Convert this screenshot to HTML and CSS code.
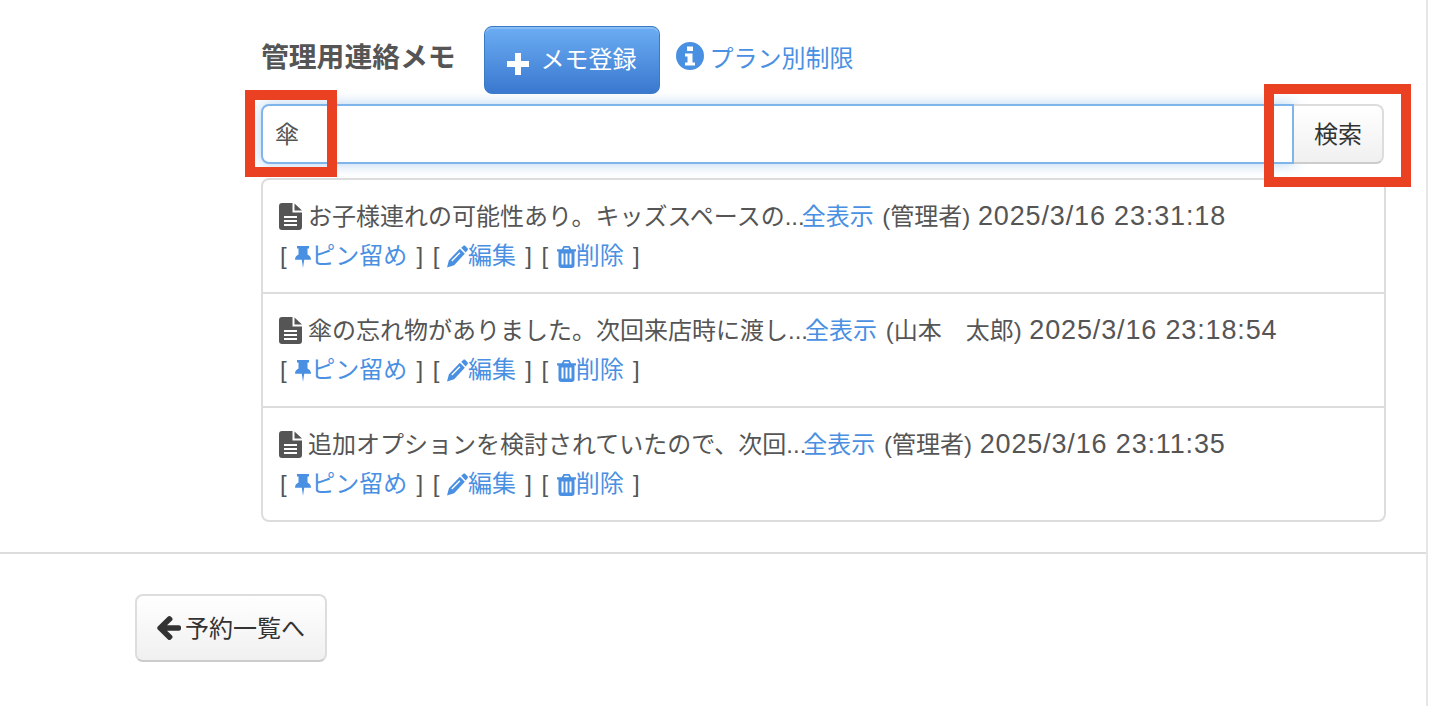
FILE: index.html
```html
<!DOCTYPE html>
<html lang="ja">
<head>
  <meta charset="UTF-8">
  <meta name="viewport" content="width=device-width, initial-scale=1.0">
  <title>管理用連絡メモ</title>
  <link rel="stylesheet" href="styles.css">
</head>
<body>
  <svg class="icon-defs">
    <symbol id="i-file" viewBox="0 0 23 27"><path fill-rule="evenodd" d="M3 0h10.500v9.500H23V24a3 3 0 0 1-3 3H3a3 3 0 0 1-3-3V3a3 3 0 0 1 3-3zM15.500 0.500L23 7.500h-7.500zM5 13v2h13v-2zM5 17v2h13v-2zM5 21v2h13v-2z"/></symbol>
    <symbol id="i-pin" viewBox="0 0 16 22"><path d="M2 0h12v2.500h-1.500v6c2.200 1 3.500 2.800 3.500 5.300H9.200L8 22l-1.200-8.200H0c0-2.500 1.300-4.300 3.500-5.300v-6H2z"/></symbol>
    <symbol id="i-pencil" viewBox="0 0 22 23"><path fill-rule="evenodd" d="M17 0.500c.7-.6 1.600-.6 2.200 0l2.300 2.300c.6.6.6 1.500 0 2.200l-2 2.200-4.600-4.800zM13.500 3.300l5.200 5.200L7.500 20.700 0 23l2-7.700zM13 7L4.500 15.800l1 1L14 8z"/></symbol>
    <symbol id="i-trash" viewBox="0 0 19 22"><path fill-rule="evenodd" d="M6.500 0h6l1.700 3.200H19v2.300h-1.500V19a3 3 0 0 1-3 3h-10a3 3 0 0 1-3-3V5.500H0V3.200h4.800zM7.500 1.800l-.6 1.400h5.200l-.6-1.400zM4.500 7.500v11h2v-11zM8.500 7.500v11h2v-11zM12.500 7.500v11h2v-11z"/></symbol>
  </svg>
  <div class="page">
    <section class="memo-section">
      <div class="memo-head">
        <h2 class="memo-title">管理用連絡メモ</h2>
        <button class="btn-primary" type="button">
          <svg class="icon-plus" viewBox="0 0 22 22"><path d="M8 0h6v8h8v6h-8v8H8v-8H0V8h8z"/></svg><span class="btn-label">メモ登録</span>
        </button>
        <a class="plan-link" href="#">
          <svg class="icon-info" viewBox="0 0 28 28"><path fill-rule="evenodd" d="M14 0a14 14 0 1 1 0 28a14 14 0 0 1 0-28zM11 4.500v4.500h6V4.500zM9 11.500v3h2.500v6H9v3h10v-3h-2.500v-9z"/></svg>プラン別制限
        </a>
      </div>
      <form class="search-row">
        <input class="search-input" type="text" value="傘">
        <button class="search-btn" type="button">検索</button>
      </form>
      <ul class="memo-list">
        <li class="memo-item">
          <div class="memo-line">
            <svg class="icon-file"><use href="#i-file"/></svg>お子様連れの可能性あり。キッズスペースの...<a class="memo-more" href="#">全表示</a> (管理者) <span class="memo-date">2025/3/16 23:31:18</span>
          </div>
          <div class="memo-actions">
            [ <a href="#"><svg class="icon-pin"><use href="#i-pin"/></svg>ピン留め</a> ] [ <a href="#"><svg class="icon-pencil"><use href="#i-pencil"/></svg>編集</a> ] [ <a href="#"><svg class="icon-trash"><use href="#i-trash"/></svg>削除</a> ]
          </div>
        </li>
        <li class="memo-item">
          <div class="memo-line">
            <svg class="icon-file"><use href="#i-file"/></svg>傘の忘れ物がありました。次回来店時に渡し...<a class="memo-more" href="#">全表示</a> (山本　太郎) <span class="memo-date">2025/3/16 23:18:54</span>
          </div>
          <div class="memo-actions">
            [ <a href="#"><svg class="icon-pin"><use href="#i-pin"/></svg>ピン留め</a> ] [ <a href="#"><svg class="icon-pencil"><use href="#i-pencil"/></svg>編集</a> ] [ <a href="#"><svg class="icon-trash"><use href="#i-trash"/></svg>削除</a> ]
          </div>
        </li>
        <li class="memo-item">
          <div class="memo-line">
            <svg class="icon-file"><use href="#i-file"/></svg>追加オプションを検討されていたので、次回...<a class="memo-more" href="#">全表示</a> (管理者) <span class="memo-date">2025/3/16 23:11:35</span>
          </div>
          <div class="memo-actions">
            [ <a href="#"><svg class="icon-pin"><use href="#i-pin"/></svg>ピン留め</a> ] [ <a href="#"><svg class="icon-pencil"><use href="#i-pencil"/></svg>編集</a> ] [ <a href="#"><svg class="icon-trash"><use href="#i-trash"/></svg>削除</a> ]
          </div>
        </li>
      </ul>
    </section>
    <div class="page-foot">
      <button class="btn-back" type="button">
        <svg class="icon-back" viewBox="0 0 24 26"><path d="M11 1.500c.8-.8 2-.8 2.800 0l1.200 1.200c.8.800.8 2 0 2.800L10 10.200h12c1.100 0 2 .9 2 2v1.600c0 1.100-.9 2-2 2H10l5 4.700c.8.800.8 2 0 2.800l-1.200 1.200c-.8.800-2 .8-2.800 0L.8 14.400c-.8-.8-.8-2 0-2.800z"/></svg>予約一覧へ
      </button>
    </div>
  </div>
  <div class="mark mark-input"></div>
  <div class="mark mark-btn"></div>
</body>
</html>
```

FILE: styles.css
```css
* {
  box-sizing: border-box;
}
html, body {
  height: 706px;
  overflow: hidden;
}
body {
  margin: 0;
  background-color: #fff;
  color: #555;
  font-family: "Liberation Sans", "Noto Sans CJK JP", sans-serif;
  font-size: 24px;
}
a {
  color: #4a90e2;
  text-decoration: none;
}
svg {
  fill: currentColor;
}
.icon-defs {
  display: none;
}
.page {
  width: 1428px;
  height: 706px;
  border-right: 2px solid #e6e6e6;
}
.memo-section {
  padding: 26px 40px 0 261px;
}
.memo-head {
  display: flex;
  align-items: center;
  height: 68px;
}
.memo-title {
  margin: 0 28px 5px 0;
  font-size: 27.800px;
  line-height: 1.2;
  color: #555;
}
.btn-primary {
  display: flex;
  align-items: center;
  justify-content: center;
  width: 176px;
  height: 68px;
  padding: 0;
  border: 1px solid #3a7bc4;
  border-radius: 8px;
  background: linear-gradient(#6badf3, #3a78cf);
  box-shadow: inset 0 2px 0 rgba(255, 255, 255, 0.2);
  color: #fff;
  font-family: inherit;
  font-size: 24px;
}
.btn-label {
  margin-bottom: 6px;
}
.icon-plus {
  width: 22px;
  height: 22px;
  margin: 8px 12px 0 0;
}
.plan-link {
  display: flex;
  align-items: center;
  margin: 0 0 8px 16px;
}
.icon-info {
  width: 28px;
  height: 28px;
  margin-right: 6px;
}
.search-row {
  display: flex;
  height: 60px;
  margin: 10px 2px 0 0;
}
.search-input {
  flex: 1;
  min-width: 0;
  padding: 0 12px 4px;
  border: 2px solid #7fb5ea;
  border-radius: 8px 0 0 8px;
  box-shadow: 0 0 14px rgba(90, 155, 225, 0.45);
  color: #555;
  font-family: inherit;
  font-size: 24px;
  outline: none;
}
.search-btn {
  width: 90px;
  padding: 0 0 4px;
  border: 2px solid #ddd;
  border-left: 0;
  border-bottom-color: #ccc;
  border-radius: 0 8px 8px 0;
  background: linear-gradient(#fff, #f0f0f0);
  color: #333;
  font-family: inherit;
  font-size: 24px;
}
.memo-list {
  margin: 14px 0 0;
  padding: 0;
  list-style: none;
  border: 2px solid #ddd;
  border-radius: 8px;
}
.memo-item {
  height: 114px;
  padding: 16px 16px 0;
}
.memo-item:first-child {
  height: 112px;
}
.memo-item + .memo-item {
  border-top: 2px solid #ddd;
}
.memo-line, .memo-actions {
  height: 40px;
  line-height: 40px;
  white-space: nowrap;
}
.memo-actions {
  padding-left: 1px;
  word-spacing: 2.800px;
}
.memo-more {
  margin: 0 2px 0 -3px;
}
.memo-date {
  margin-left: 1px;
  font-size: 27px;
  letter-spacing: 0.850px;
}
.icon-file {
  width: 23px;
  height: 27px;
  margin-right: 6px;
  vertical-align: -5px;
}
.icon-pin {
  width: 16px;
  height: 22px;
  margin-left: -1px;
  vertical-align: -4px;
}
.icon-pencil {
  width: 21px;
  height: 23px;
  margin-left: -2px;
  vertical-align: -4px;
}
.icon-trash {
  width: 19px;
  height: 22px;
  margin-left: -1px;
  vertical-align: -4px;
}
.page-foot {
  margin-top: 30px;
  padding: 40px 0 0 135px;
  border-top: 2px solid #ddd;
}
.btn-back {
  display: flex;
  align-items: center;
  justify-content: center;
  width: 192px;
  height: 68px;
  padding: 0 0 4px;
  border: 2px solid #ddd;
  border-bottom-color: #ccc;
  border-radius: 8px;
  background: linear-gradient(#fff, #f0f0f0);
  color: #333;
  font-family: inherit;
  font-size: 24px;
}
.icon-back {
  width: 24px;
  height: 26px;
  margin: 4px 4px 0 0;
}
.mark {
  position: absolute;
  border: 10px solid #ea4123;
}
.mark-input {
  left: 245px;
  top: 90px;
  width: 92px;
  height: 87px;
}
.mark-btn {
  left: 1264px;
  top: 84px;
  width: 147px;
  height: 103px;
}
```
